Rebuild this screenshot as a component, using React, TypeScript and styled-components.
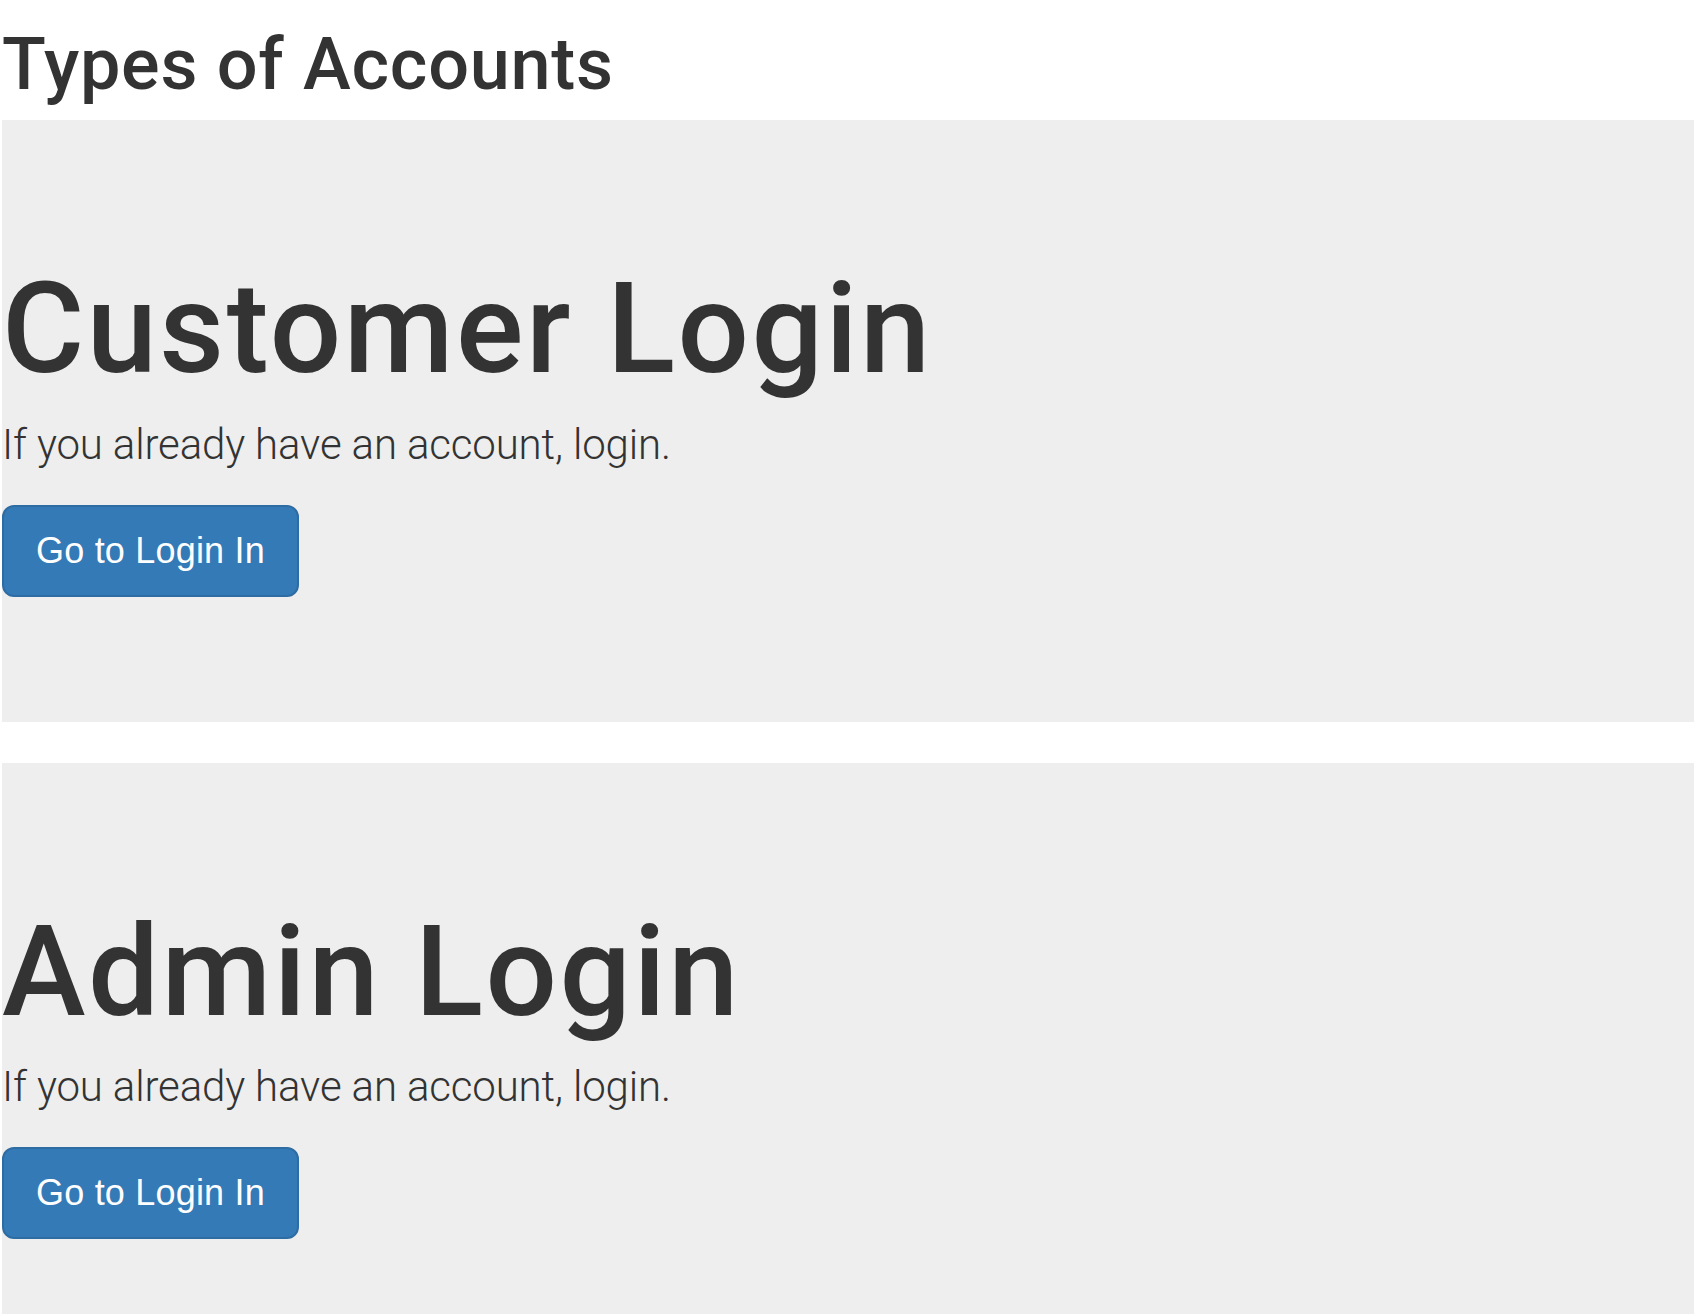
import styled, { createGlobalStyle } from 'styled-components';

const GlobalStyle = createGlobalStyle`
    html, body {
        margin: 0;
        padding: 0;
        background: #fff;
    }
    body {
        font-family: "Liberation Sans", Arial, sans-serif;
        color: #333;
    }
`;

const Page = styled.div`
    padding-left: 2px;
`;

const Title = styled.h1`
    font-family: Roboto, "Liberation Sans", sans-serif;
    font-size: 72px;
    font-weight: 500;
    line-height: 1.1;
    letter-spacing: 0.01em;
    margin: 25px 0 16px;
`;

const Jumbotron = styled.section`
    background: #eee;
    padding: 96px 0;
    margin-bottom: 41px;
`;

const Heading = styled.h1`
    font-family: Roboto, "Liberation Sans", sans-serif;
    font-size: 126px;
    font-weight: 500;
    line-height: 1.1;
    letter-spacing: 0.02em;
    margin: 44px 0 16px;
`;

const Lead = styled.p`
    font-family: Roboto, "Liberation Sans", sans-serif;
    font-size: 42px;
    font-weight: 300;
    line-height: 60px;
    letter-spacing: -0.15px;
    margin: 0 0 30px;
`;

const ButtonRow = styled.p`
    margin: 0 0 29px;
    line-height: 0;
`;

const Button = styled.a`
    display: inline-block;
    box-sizing: border-box;
    height: 92px;
    padding: 0 32px;
    border: 2px solid #2e6da4;
    border-radius: 12px;
    background: #337ab7;
    color: #fff;
    font-size: 36px;
    line-height: 88px;
    letter-spacing: 0.2px;
    text-decoration: none;
    cursor: pointer;
`;

const accounts = ['Customer Login', 'Admin Login'];

const App = () => {
    return (
        <Page>
            <GlobalStyle />
            <Title>Types of Accounts</Title>
            {accounts.map((name) => (
                <Jumbotron key={name}>
                    <Heading>{name}</Heading>
                    <Lead>If you already have an account, login.</Lead>
                    <ButtonRow>
                        <Button>Go to Login In</Button>
                    </ButtonRow>
                </Jumbotron>
            ))}
        </Page>
    );
};

export default App;
